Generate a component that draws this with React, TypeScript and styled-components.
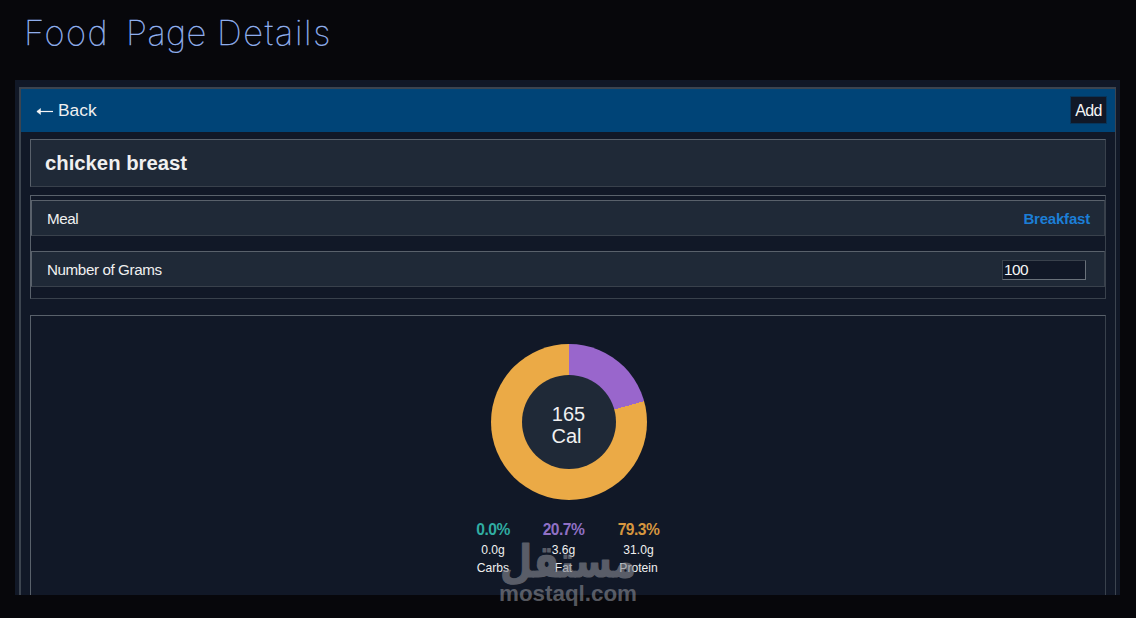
import React from "react";
import styled, { createGlobalStyle } from "styled-components";

const GlobalStyle = createGlobalStyle`
  * { box-sizing: border-box; }
  html, body { margin: 0; padding: 0; background: #07070b; overflow: hidden; }
  body { font-family: "Liberation Sans", Arial, sans-serif; color: #f0f0f0; }
`;

const Page = styled.main`
  position: relative;
  width: 1136px;
  height: 618px;
  padding: 0 16px 0 15px;
  background: #07070b;
  overflow: hidden;
`;

const Title = styled.h1`
  display: flex;
  margin: 0;
  height: 80px;
  padding: 12px 0 0 9px;
  font-family: Inter, Lato, sans-serif;
  font-weight: 100;
  font-size: 34.5px;
  line-height: 42px;
  color: #a0c0ff;
  -webkit-text-stroke: 0.4px #90b0f0;
  white-space: pre;
`;

const Word = styled.span<{ $width: number; $spacing: number }>`
  width: ${(p) => p.$width}px;
  letter-spacing: ${(p) => p.$spacing}px;
`;

const Frame = styled.section`
  height: 515px;
  padding: 7px 4px 0;
  background: #111827;
  overflow: hidden;
`;

const Screen = styled.div`
  height: 520px;
  border: 1px solid #3c444f;
  border-width: 2px 1px 0 2px;
`;

const TopBar = styled.header`
  display: flex;
  align-items: center;
  justify-content: space-between;
  height: 43px;
  padding: 0 8px 0 15px;
  background: #004477;
`;

const BackLink = styled.a`
  display: flex;
  align-items: center;
  gap: 5px;
  padding-bottom: 2px;
  font-size: 17.4px;
  line-height: 20px;

  svg {
    margin-top: 3px;
  }
`;

const AddButton = styled.button`
  width: 37px;
  height: 28px;
  margin-top: -1px;
  padding: 1px 0 0;
  border: 1px solid #07355b;
  background: #111827;
  color: #f5f5f5;
  font: 16px/25px "Liberation Sans", Arial, sans-serif;
  letter-spacing: -0.6px;
`;

const Content = styled.div`
  padding: 7px 9px 0;
`;

const Panel = styled.section`
  border: 1px solid #39414c;
  border-top-color: #59616b;
  border-left-color: #59616b;
`;

const NamePanel = styled(Panel)`
  height: 48px;
  padding-left: 14px;
  background: #1f2937;
`;

const FoodName = styled.h2`
  margin: 0;
  font-size: 20.3px;
  line-height: 47px;
  letter-spacing: 0;
`;

const OptionsPanel = styled(Panel)`
  display: flex;
  flex-direction: column;
  gap: 15px;
  height: 104px;
  margin-top: 8px;
  padding: 4px 0 0;
`;

const OptionRow = styled(Panel)`
  display: flex;
  align-items: center;
  justify-content: space-between;
  height: 36px;
  padding: 0 14px 0 15px;
  background: #1f2937;
  font-size: 15.2px;
  letter-spacing: -0.4px;
`;

const MealName = styled.strong`
  color: #1c7ed6;
  font-size: 15px;
  letter-spacing: -0.2px;
`;

const GramsInput = styled.input`
  width: 84px;
  height: 20px;
  margin: 2px 4px 0 0;
  padding: 0 1px;
  border: 1px solid #39414c;
  border-right-color: #69717a;
  border-bottom-color: #69717a;
  border-radius: 0;
  background: #111827;
  color: #f5f5f5;
  font: 15.4px "Liberation Sans", Arial, sans-serif;
  letter-spacing: -0.5px;
`;

const ChartPanel = styled(Panel)`
  display: flex;
  flex-direction: column;
  align-items: center;
  height: 300px;
  margin-top: 16px;
  padding-top: 28px;
`;

const Donut = styled.div`
  display: grid;
  place-items: center;
  width: 156px;
  height: 156px;
  margin-left: 1px;
  border-radius: 50%;
  background: conic-gradient(#9966cc 0 20.7%, #ebaa46 20.7% 100%);
`;

const DonutCenter = styled.div`
  width: 94px;
  height: 94px;
  padding-top: 28px;
  border-radius: 50%;
  background: #1f2937;
  font-size: 20px;
  line-height: 22px;
  text-align: center;

  div:last-child {
    margin-right: 4px;
  }
`;

const Macros = styled.div`
  display: flex;
  gap: 33px;
  margin-top: 20px;
`;

const Macro = styled.div<{ $width: number }>`
  width: ${(p) => p.$width}px;
  display: flex;
  flex-direction: column;
  align-items: center;
  font-size: 12.1px;
  line-height: 18px;
`;

const Percent = styled.strong<{ $color: string }>`
  color: ${(p) => p.$color};
  font-size: 15.6px;
  line-height: 20px;
  letter-spacing: -0.5px;
  margin-bottom: 1px;
`;

const Watermark = styled.svg`
  position: absolute;
  left: 490px;
  top: 534px;
  opacity: 0.62;
`;

const macros = [
  { name: "Carbs", percent: "0.0%", grams: "0.0g", color: "#30aca2", width: 33 },
  { name: "Fat", percent: "20.7%", grams: "3.6g", color: "#9070c4", width: 42 },
  { name: "Protein", percent: "79.3%", grams: "31.0g", color: "#d6963f", width: 42 },
];

export default function App() {
  return (
    <>
      <GlobalStyle />
      <Page>
        <Title>
          <Word $width={102} $spacing={1.6}>Food</Word>
          <Word $width={91} $spacing={0.5}>Page</Word>
          <Word $width={120} $spacing={1.7}>Details</Word>
        </Title>
        <Frame>
          <Screen>
            <TopBar>
              <BackLink>
                <svg width="17" height="10" viewBox="0 0 17 10" fill="none" stroke="#f5f5f5">
                  <path d="M1 5.5H17" strokeWidth="1.2" />
                  <path d="M4.5 2.5L0.8 5.5L4.5 8.5Z" fill="#f5f5f5" strokeWidth="0.5" />
                </svg>
                Back
              </BackLink>
              <AddButton>Add</AddButton>
            </TopBar>
            <Content>
              <NamePanel>
                <FoodName>chicken breast</FoodName>
              </NamePanel>
              <OptionsPanel>
                <OptionRow>
                  <span>Meal</span>
                  <MealName>Breakfast</MealName>
                </OptionRow>
                <OptionRow>
                  <span>Number of Grams</span>
                  <GramsInput defaultValue="100" />
                </OptionRow>
              </OptionsPanel>
              <ChartPanel>
                <Donut>
                  <DonutCenter>
                    <div>165</div>
                    <div>Cal</div>
                  </DonutCenter>
                </Donut>
                <Macros>
                  {macros.map((m) => (
                    <Macro key={m.name} $width={m.width}>
                      <Percent $color={m.color}>{m.percent}</Percent>
                      <span>{m.grams}</span>
                      <span>{m.name}</span>
                    </Macro>
                  ))}
                </Macros>
              </ChartPanel>
            </Content>
          </Screen>
        </Frame>
        <Watermark width="160" height="80" viewBox="0 0 160 80" fill="#858891">
          <text
            x="78"
            y="43"
            textAnchor="middle"
            direction="rtl"
            fontFamily="DejaVu Sans, sans-serif"
            fontWeight="700"
            fontSize="45"
            textLength="136"
            lengthAdjust="spacingAndGlyphs"
            stroke="#858891"
            strokeWidth="1.2"
            strokeLinejoin="round"
          >
            مستقل
          </text>
          <text
            x="9"
            y="67"
            fontFamily="Liberation Sans, sans-serif"
            fontWeight="700"
            fontSize="22.5"
            textLength="138"
            lengthAdjust="spacingAndGlyphs"
          >
            mostaql.com
          </text>
        </Watermark>
      </Page>
    </>
  );
}
